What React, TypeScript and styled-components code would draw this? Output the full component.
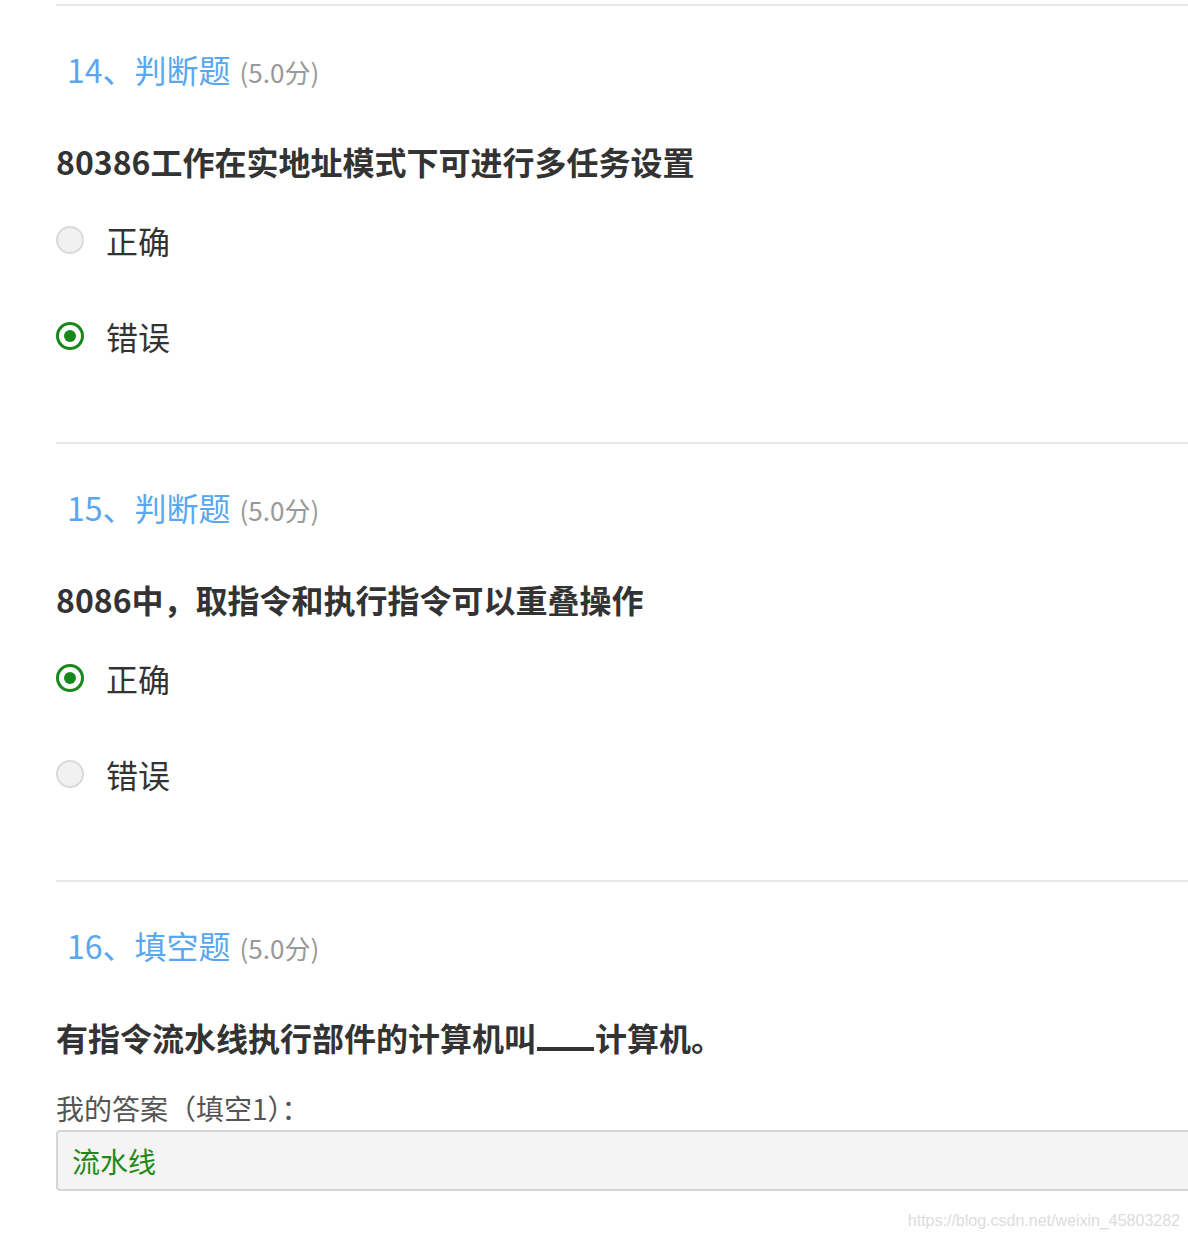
import React from "react";
import styled, { createGlobalStyle } from "styled-components";

const Global = createGlobalStyle`
  html, body { margin: 0; padding: 0; background: #fff; overflow: hidden; }
  body { font-family: "Noto Sans CJK SC", "Noto Sans", sans-serif; color: #333; }
`;

const Page = styled.div`
  position: relative;
  width: 1188px;
  height: 1238px;
  overflow: hidden;
  padding: 4px 0 0 56px;
  box-sizing: border-box;
`;

const Section = styled.section`
  border-top: 2px solid #e8e8e8;
  width: calc(100% + 20px);
  padding-bottom: 84px;
`;

const Title = styled.div`
  margin-top: 41px;
  padding-left: 11px;
  height: 44px;
  line-height: 44px;
  display: flex;
  align-items: baseline;
  gap: 9px;
`;

const TitleMain = styled.span`
  font-size: 32px;
  color: #5aa7ee;
`;

const Score = styled.span`
  font-size: 26px;
  color: #999;
`;

const Question = styled.div`
  margin-top: 48px;
  height: 44px;
  line-height: 44px;
  font-size: 32px;
  font-weight: 700;
  color: #333;
  white-space: nowrap;
`;

const Blank = styled.span`
  display: inline-block;
  width: 57px;
  height: 30px;
  border-bottom: 4px solid #333;
  vertical-align: baseline;
  margin: 0 1px;
`;

const Options = styled.div`
  margin-top: 35px;
  display: flex;
  flex-direction: column;
  gap: 52px;
`;

const OptionRow = styled.label`
  display: flex;
  align-items: center;
  height: 44px;
  gap: 22px;
`;

const Radio = styled.span<{ $checked?: boolean }>`
  width: 28px;
  height: 28px;
  box-sizing: border-box;
  border-radius: 50%;
  border: ${(p) => (p.$checked ? "3px solid #17891a" : "2px solid #dadada")};
  background: ${(p) => (p.$checked ? "#fff" : "#f1f1f1")};
  display: flex;
  align-items: center;
  justify-content: center;
  flex-shrink: 0;
  &::after {
    content: "";
    display: ${(p) => (p.$checked ? "block" : "none")};
    width: 12px;
    height: 12px;
    border-radius: 50%;
    background: #17891a;
  }
`;

const OptionText = styled.span`
  font-size: 32px;
  color: #333;
  line-height: 44px;
`;

const AnswerLabel = styled.div`
  margin-top: 29px;
  font-size: 28px;
  line-height: 40px;
  color: #555;
`;

const AnswerBox = styled.div`
  margin-top: 2px;
  height: 61px;
  box-sizing: border-box;
  border: 2px solid #d6d6d6;
  border-radius: 4px;
  background: #f4f4f4;
  display: flex;
  align-items: center;
  padding-left: 14px;
  font-size: 28px;
  color: #1f8a1a;
`;

const Watermark = styled.div`
  position: absolute;
  right: 8px;
  bottom: 8px;
  font-family: "Liberation Sans", Arial, sans-serif;
  font-size: 16px;
  color: #dcdcdc;
`;

type Q = {
  num: number;
  kind: string;
  text: string;
  options: { label: string; checked: boolean }[];
};

const judge: Q[] = [
  {
    num: 14,
    kind: "判断题",
    text: "80386工作在实地址模式下可进行多任务设置",
    options: [
      { label: "正确", checked: false },
      { label: "错误", checked: true },
    ],
  },
  {
    num: 15,
    kind: "判断题",
    text: "8086中，取指令和执行指令可以重叠操作",
    options: [
      { label: "正确", checked: true },
      { label: "错误", checked: false },
    ],
  },
];

export default function App() {
  return (
    <>
      <Global />
      <Page>
        {judge.map((q) => (
          <Section key={q.num}>
            <Title>
              <TitleMain>
                {q.num}、{q.kind}
              </TitleMain>
              <Score>(5.0分)</Score>
            </Title>
            <Question>{q.text}</Question>
            <Options>
              {q.options.map((o) => (
                <OptionRow key={o.label}>
                  <Radio $checked={o.checked} />
                  <OptionText>{o.label}</OptionText>
                </OptionRow>
              ))}
            </Options>
          </Section>
        ))}
        <Section>
          <Title>
            <TitleMain>16、填空题</TitleMain>
            <Score>(5.0分)</Score>
          </Title>
          <Question>
            有指令流水线执行部件的计算机叫<Blank />计算机。
          </Question>
          <AnswerLabel>我的答案（填空1）：</AnswerLabel>
          <AnswerBox>流水线</AnswerBox>
        </Section>
        <Watermark>https://blog.csdn.net/weixin_45803282</Watermark>
      </Page>
    </>
  );
}
